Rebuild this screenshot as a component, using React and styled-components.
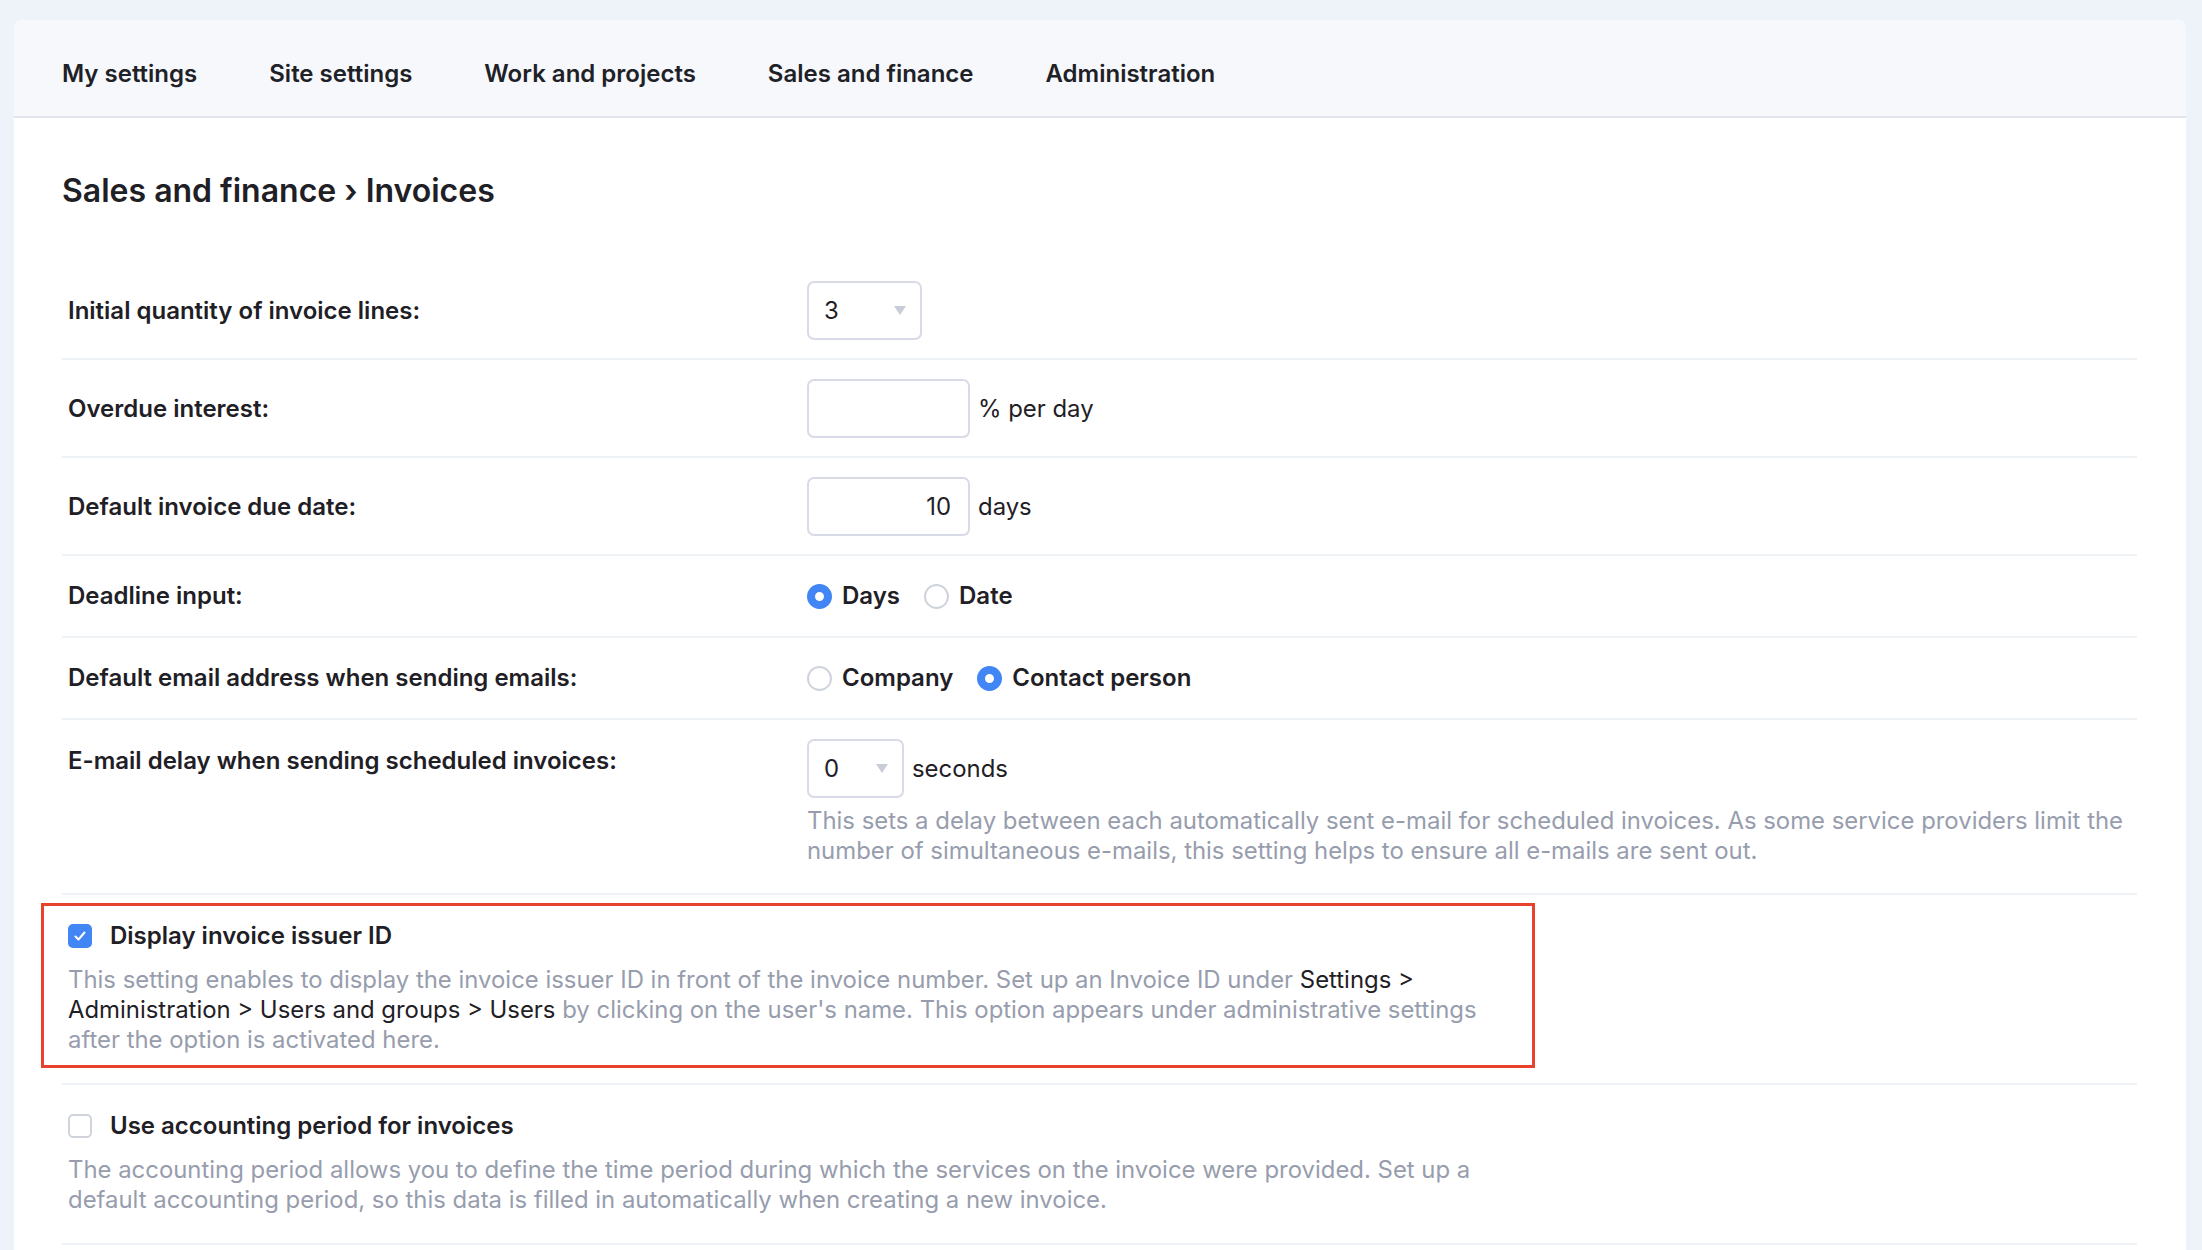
import React from 'react'
import styled, { createGlobalStyle } from 'styled-components'

const GlobalStyle = createGlobalStyle`
  body {
    margin: 0;
    background: #eef2f9;
    font-family: Inter, "Noto Sans", sans-serif;
    color: #1f2026;
  }
`

const Page = styled.div`
  padding: 20px 16px 0 14px;
`
const Card = styled.div`
  background: #fff;
  border-radius: 8px 8px 0 0;
  overflow: hidden;
  min-height: 1240px;
`
const TabBar = styled.div`
  box-sizing: border-box;
  display: flex;
  align-items: center;
  height: 98px;
  padding: 10px 12px 0;
  background: #f7f8fc;
  border-bottom: 2px solid #e3e5ee;
`
const Tab = styled.div`
  padding: 0 36px;
  font-size: 24px;
  font-weight: 600;
  color: #202127;
`
const Content = styled.div`
  padding: 0 49px 40px 48px;
`
const Heading = styled.h1`
  margin: 53px 0 51px;
  font-size: 32px;
  line-height: 40px;
  font-weight: 600;
  color: #1f2025;
`
const Row = styled.div`
  display: flex;
  align-items: ${p => (p.$top ? 'flex-start' : 'center')};
  padding: ${p => p.$pad || '19px 0 18px 6px'};
  border-bottom: 2px solid #eef1f6;
`
const Label = styled.div`
  width: 739px;
  flex-shrink: 0;
  font-size: 24px;
  line-height: 30px;
  font-weight: 600;
  padding-top: ${p => (p.$top ? '7px' : '0')};
`
const Control = styled.div`
  flex: 1;
  min-width: 0;
`
const Inline = styled.div`
  display: flex;
  align-items: center;
  gap: 8px;
  font-size: 23.9px;
`
const Field = styled.input`
  box-sizing: border-box;
  width: ${p => p.$w || 163}px;
  height: 59px;
  border: 2px solid #d8dbe5;
  border-radius: 7px;
  padding: 0 17px;
  font: inherit;
  font-size: 23.9px;
  color: #1f2026;
  text-align: ${p => p.$align || 'left'};
  outline: none;
`
const SelectBox = styled.div`
  box-sizing: border-box;
  width: ${p => p.$w}px;
  height: 59px;
  display: flex;
  align-items: center;
  justify-content: space-between;
  border: 2px solid #d8dbe5;
  border-radius: 7px;
  padding: 0 14px 0 15px;
  font-size: 23.9px;
`
const RadioGroup = styled.div`
  display: flex;
  align-items: center;
  gap: 24px;
`
const RadioOption = styled.label`
  display: flex;
  align-items: center;
  gap: 10px;
  font-size: 24px;
  line-height: 28px;
  font-weight: 600;
`
const RadioDot = styled.span`
  box-sizing: border-box;
  width: 25px;
  height: 25px;
  border-radius: 50%;
  background: #fff;
  border: ${p => (p.$on ? '8px solid #4285f4' : '2px solid #cfd3dc')};
`
const Help = styled.div`
  margin-top: 8px;
  font-size: 23.9px;
  line-height: 30px;
  color: #979dad;
`
const CheckSection = styled.div`
  position: relative;
  padding: 26px 6px 28px;
  border-bottom: 2px solid #eef1f6;
`
const CheckTitle = styled.div`
  display: flex;
  align-items: center;
  gap: 18px;
  font-size: 24px;
  line-height: 30px;
  font-weight: 600;
`
const Box = styled.span`
  box-sizing: border-box;
  width: 24px;
  height: 24px;
  border-radius: 5px;
  display: flex;
  align-items: center;
  justify-content: center;
  background: ${p => (p.$on ? '#4285f4' : '#fff')};
  border: ${p => (p.$on ? 'none' : '2px solid #cfd3dc')};
`
const Description = styled.div`
  margin-top: 14px;
  max-width: 1440px;
  font-size: 23.9px;
  line-height: 30px;
  color: #979dad;
`
const Dark = styled.span`
  color: #1f2026;
`
const Highlight = styled.div`
  position: absolute;
  top: 8px;
  left: -21px;
  width: 1494px;
  height: 165px;
  box-sizing: border-box;
  border: 3px solid #e8412c;
  pointer-events: none;
`

const Arrow = () => (
  <svg width="12" height="9" viewBox="0 0 12 9">
    <path d="M0 0h12L6 9z" fill="#c9cdd8" />
  </svg>
)

const Check = () => (
  <svg width="14" height="14" viewBox="0 0 14 14">
    <path d="M2.5 7.5l3 3 6-7" fill="none" stroke="#fff" strokeWidth="2" strokeLinecap="round" strokeLinejoin="round" />
  </svg>
)

const tabs = ['My settings', 'Site settings', 'Work and projects', 'Sales and finance', 'Administration']

function Radio({ on, children }) {
  return (
    <RadioOption>
      <RadioDot $on={on} />
      {children}
    </RadioOption>
  )
}

export default function App() {
  return (
    <Page>
      <GlobalStyle />
      <Card>
        <TabBar>
          {tabs.map(t => <Tab key={t}>{t}</Tab>)}
        </TabBar>
        <Content>
          <Heading>Sales and finance › Invoices</Heading>

          <Row>
            <Label>Initial quantity of invoice lines:</Label>
            <Control>
              <SelectBox $w={115}>3<Arrow /></SelectBox>
            </Control>
          </Row>
          <Row>
            <Label>Overdue interest:</Label>
            <Control>
              <Inline><Field readOnly value="" />% per day</Inline>
            </Control>
          </Row>
          <Row>
            <Label>Default invoice due date:</Label>
            <Control>
              <Inline><Field readOnly value="10" $align="right" />days</Inline>
            </Control>
          </Row>
          <Row $pad="25px 0 25px 6px">
            <Label>Deadline input:</Label>
            <RadioGroup>
              <Radio on>Days</Radio>
              <Radio>Date</Radio>
            </RadioGroup>
          </Row>
          <Row $pad="25px 0 25px 6px">
            <Label>Default email address when sending emails:</Label>
            <RadioGroup>
              <Radio>Company</Radio>
              <Radio on>Contact person</Radio>
            </RadioGroup>
          </Row>
          <Row $top $pad="19px 0 27px 6px">
            <Label $top>E-mail delay when sending scheduled invoices:</Label>
            <Control>
              <Inline><SelectBox $w={97}>0<Arrow /></SelectBox>seconds</Inline>
              <Help>
                This sets a delay between each automatically sent e-mail for scheduled invoices. As some service providers limit the number of simultaneous e-mails, this setting helps to ensure all e-mails are sent out.
              </Help>
            </Control>
          </Row>

          <CheckSection>
            <Highlight />
            <CheckTitle><Box $on><Check /></Box>Display invoice issuer ID</CheckTitle>
            <Description>
              This setting enables to display the invoice issuer ID in front of the invoice number. Set up an Invoice ID under <Dark>Settings &gt; Administration &gt; Users and groups &gt; Users</Dark> by clicking on the user's name. This option appears under administrative settings after the option is activated here.
            </Description>
          </CheckSection>
          <CheckSection>
            <CheckTitle><Box />Use accounting period for invoices</CheckTitle>
            <Description>
              The accounting period allows you to define the time period during which the services on the invoice were provided. Set up a default accounting period, so this data is filled in automatically when creating a new invoice.
            </Description>
          </CheckSection>
        </Content>
      </Card>
    </Page>
  )
}
